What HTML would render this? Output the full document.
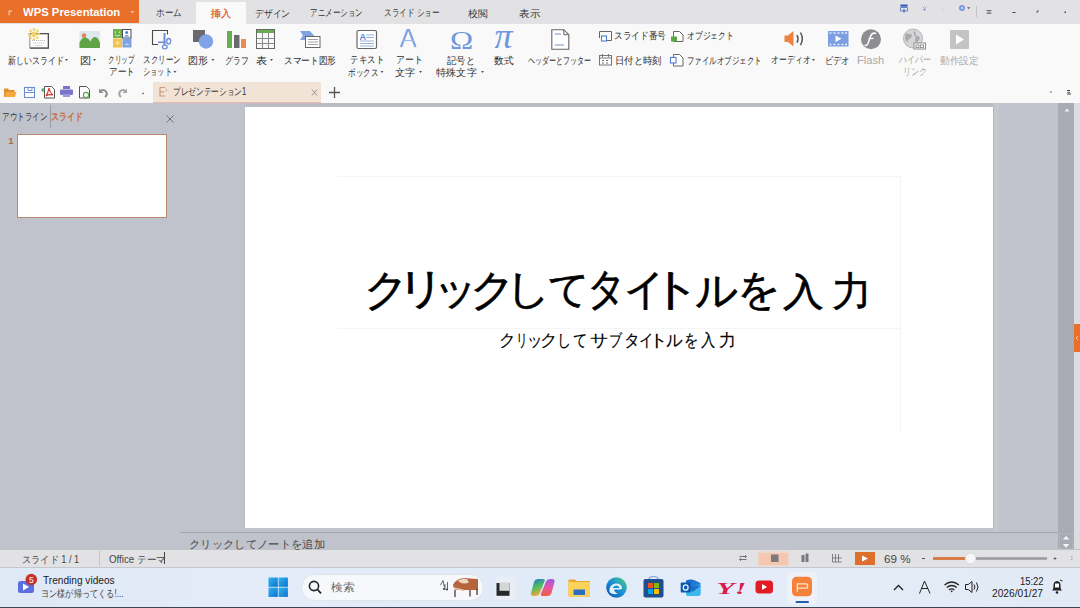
<!DOCTYPE html>
<html><head><meta charset="utf-8">
<style>
*{margin:0;padding:0;box-sizing:border-box}
html,body{width:1080px;height:608px;overflow:hidden;background:#c0c3cb;font-family:"Liberation Sans",sans-serif;color:#222;position:relative}
.a{position:absolute}
.tx{position:absolute;white-space:nowrap;transform-origin:0 0}
svg{position:absolute;overflow:visible}
</style></head><body>
<!-- tab bar -->
<div class="a" style="left:0;top:0;width:1080px;height:24px;background:#e2e2e5"></div>
<div class="a" style="left:0;top:0;width:139px;height:23px;background:#e8702b"></div>
<svg style="left:0;top:0" width="139" height="23">
  <path d="M8.5 10.5h3.5v1.2h-2.3v3.5h-1.2z" fill="#f6c9ab"/>
  <path d="M130 11h4.5l-2.25 2.5z" fill="#f3b48f"/>
</svg>
<div class="a" style="left:196px;top:2px;width:50px;height:22px;background:#f9f9f9"></div>
<!-- top right icons -->
<svg style="left:890px;top:0" width="190" height="23">
  <rect x="10.5" y="4.5" width="7" height="2.2" fill="#3658b8"/>
  <path d="M10.5 7.5h7v3.5h-7z" fill="none" stroke="#5a78c8" stroke-width="0.9"/>
  <path d="M14 9v3.5" stroke="#3658b8" stroke-width="1.2"/>
  <path d="M32.5 6.5l2 2 2-2M34.5 8.5v2.5M33 9.5h3" fill="none" stroke="#8fa3d8" stroke-width="0.9"/>
  <path d="M53 12v-4M51.5 9.5l1.5-1.8 1.5 1.8" fill="none" stroke="#dadade" stroke-width="0.9"/>
  <circle cx="72" cy="8" r="3" fill="#7b98dc"/>
  <circle cx="72" cy="8" r="1.2" fill="#c4d2f2"/>
  <path d="M77 7.2h3.4l-1.7 2z" fill="#666"/>
  <path d="M86.5 6v11" stroke="#c3c3c7" stroke-width="1"/>
  <path d="M96.5 10.5h5M97.5 12h3M96.5 13.3h5" stroke="#555" stroke-width="0.8"/>
  <path d="M122.5 12.5h3" stroke="#444" stroke-width="1"/>
  <path d="M146.5 12.5l2-2" stroke="#666" stroke-width="1.2"/>
  <rect x="174.5" y="11.5" width="1.5" height="1.5" fill="#444"/>
</svg>

<!-- ribbon -->
<div class="a" style="left:0;top:24px;width:1080px;height:79px;background:#f9f9f9"></div>

<!-- ribbon icons -->
<svg style="left:0;top:0" width="1080" height="103">
  <!-- new slide -->
  <rect x="29.8" y="33.6" width="18.5" height="14.4" fill="#fff" stroke="#8a8a8a" stroke-width="1"/>
  <path d="M30 33.6h18.4v14.6h-18.4" fill="none" stroke="#505050" stroke-width="1.2"/>
  <path d="M32 40.5h14M33 43h12M35 45.5h8" stroke="#b0b0b0" stroke-width="0.8" stroke-dasharray="1.2 0.8"/>
  <g fill="#f1d36e">
    <circle cx="34" cy="34.3" r="2.8"/>
    <circle cx="34" cy="29.5" r="1.4"/><circle cx="34" cy="39.1" r="1.4"/>
    <circle cx="29.2" cy="34.3" r="1.4"/><circle cx="38.8" cy="34.3" r="1.4"/>
    <circle cx="30.6" cy="30.9" r="1.3"/><circle cx="37.4" cy="37.7" r="1.3"/>
    <circle cx="37.4" cy="30.9" r="1.3"/><circle cx="30.6" cy="37.7" r="1.3"/>
  </g>
  <!-- picture -->
  <rect x="79.5" y="31" width="20.5" height="17" fill="#dfe7ee"/>
  <circle cx="84" cy="35.5" r="2.3" fill="#e0875a"/>
  <path d="M79.5 48v-5.5q3-6 6.5-5 q3 1 4.5 4 q2-5 5-4.5 q3 1 4.5 6v5z" fill="#5fa546"/>
  <!-- clipart -->
  <rect x="113" y="29" width="9" height="9" fill="#6fb34f"/>
  <rect x="122.5" y="29.5" width="8.5" height="8.5" fill="#fff" stroke="#4a4a5a" stroke-width="1"/>
  <circle cx="126.7" cy="32.5" r="1.5" fill="#4f7fd0"/>
  <path d="M124 36.5q2.7-3 5.4 0z" fill="#4f7fd0"/>
  <path d="M115.5 31.5v1.5M119.5 31.5v1.5M115 35q2.5 2 5 0" stroke="#cfe8b8" stroke-width="1" fill="none"/>
  <rect x="113" y="38.5" width="9" height="9" fill="#f2c24c"/>
  <circle cx="117.5" cy="43" r="2" fill="#f9e08e"/>
  <rect x="122.5" y="38.5" width="9" height="9" fill="#7ea3e0"/>
  <path d="M124.5 45q2.5-3 5 0z" fill="#c8d8f4"/>
  <!-- screenshot -->
  <path d="M167.5 34.5V30.5H152.5V44.5H158" fill="none" stroke="#4a4a4a" stroke-width="1.1"/>
  <path d="M164.5 33v12.5" stroke="#6f8fd8" stroke-width="2"/>
  <path d="M158 42.3h7.5" stroke="#6f8fd8" stroke-width="1.6"/>
  <ellipse cx="168.7" cy="41.3" rx="2" ry="2.8" fill="none" stroke="#6f8fd8" stroke-width="1.3"/>
  <ellipse cx="164.8" cy="47" rx="2.4" ry="1.8" fill="none" stroke="#6f8fd8" stroke-width="1.3"/>
  <!-- shape -->
  <rect x="193" y="30" width="12" height="12" fill="#6a6a6e"/>
  <circle cx="206" cy="41.5" r="7.2" fill="#7ea3e6"/>
  <!-- graph -->
  <rect x="227" y="31" width="5" height="17" fill="#6aad4d"/>
  <rect x="234" y="35" width="5.5" height="13" fill="#6b6b6f"/>
  <rect x="241" y="39" width="5" height="9" fill="#ec8b4d"/>
  <!-- table -->
  <rect x="256" y="29" width="19" height="4" fill="#6aad4d"/>
  <rect x="256.5" y="29.5" width="18" height="19" fill="none" stroke="#666" stroke-width="1"/>
  <path d="M256.5 38.5h18M256.5 43.5h18M262.5 33v15.5M268.5 33v15.5" stroke="#8a8a8a" stroke-width="1"/>
  <!-- smart art -->
  <path d="M300 31h10l4 4.5-4 4.5h-10l3-4.5z" fill="#7ea3e0"/>
  <rect x="305.5" y="36.5" width="14.5" height="11" fill="#fff" stroke="#666" stroke-width="1"/>
  <path d="M308 39.5h10M308 42h10M308 44.5h10" stroke="#999" stroke-width="0.9"/>
  <!-- textbox -->
  <rect x="357" y="30.5" width="19.5" height="18" rx="1.5" fill="#fff" stroke="#666" stroke-width="1.2"/>
  <text x="359.5" y="39.5" font-size="9" font-family="Liberation Sans" font-weight="bold" fill="#5a86d6">A</text>
  <path d="M366 35h8M366 37.5h8M360 41h14M360 43.5h14M360 46h14" stroke="#8fa9d8" stroke-width="0.9"/>
  <!-- art text -->
  <path d="M401 47l6.5-17l1.5 0l6.5 17" fill="none" stroke="#7ea3e0" stroke-width="2.2"/>
  <path d="M403 40.5h11" stroke="#9ab7e8" stroke-width="1.2"/>
  <!-- omega -->
  <text x="0" y="0" font-size="26" font-family="Liberation Serif" fill="#6f97de" transform="translate(450 48.5) scale(1.2 1)">Ω</text>
  <!-- pi -->
  <text x="494.5" y="47.5" font-size="36" font-family="Liberation Serif" font-style="italic" fill="#6f97de">π</text>
  <!-- header footer -->
  <path d="M551.8 29.7h12l5 5v14.5h-17z" fill="#fff" stroke="#666" stroke-width="1.1"/>
  <path d="M563.8 29.7v5h5" fill="none" stroke="#666" stroke-width="1"/>
  <path d="M555 34h6M555 45h9" stroke="#6c8fd0" stroke-width="1.2"/>
  <!-- slide number -->
  <path d="M599.5 38V31.5H611.5V40.5H607" fill="none" stroke="#666" stroke-width="1"/>
  <rect x="601.5" y="36" width="5" height="5" fill="#fff" stroke="#4f7fd0" stroke-width="1.1"/>
  <!-- object -->
  <path d="M673.5 31.5h6l3.5 3.5v6.5h-9.5z" fill="#fff" stroke="#666" stroke-width="1"/>
  <rect x="671" y="36.5" width="6" height="5" fill="#5aa848"/>
  <!-- date time -->
  <rect x="599.5" y="55.5" width="12" height="9.5" fill="#fff" stroke="#777" stroke-width="1"/>
  <path d="M599.5 58h12M602.5 54v3M608.5 54v3M602 60.5h2M606 60.5h2M602 63h2M606 63h2" stroke="#777" stroke-width="1"/>
  <!-- file object -->
  <path d="M673.5 54.5h6l3.5 3.5v8h-9.5z" fill="#fff" stroke="#666" stroke-width="1"/>
  <rect x="670.5" y="57.5" width="5.5" height="5.5" fill="#fff" stroke="#4f7fd0" stroke-width="1.1"/>
  <!-- audio -->
  <path d="M784.5 35.5h3.5l5.5-4.5v15.5l-5.5-4.5h-3.5z" fill="#ec8340"/>
  <path d="M797 35q2 3.8 0 7.6" fill="none" stroke="#555" stroke-width="1.5"/>
  <path d="M800.5 32.5q3.5 6.3 0 12.6" fill="none" stroke="#555" stroke-width="1.5"/>
  <!-- video -->
  <rect x="828" y="31" width="20.5" height="15.5" fill="#7b9fe0"/>
  <path d="M829.5 33h2M833.5 33h2M837.5 33h2M841.5 33h2M845 33h2M829.5 44.5h2M833.5 44.5h2M837.5 44.5h2M841.5 44.5h2M845 44.5h2" stroke="#e8eefa" stroke-width="1.3"/>
  <path d="M835.5 35.5l6 3.2-6 3.2z" fill="#fff"/>
  <!-- flash -->
  <circle cx="871" cy="39.3" r="10" fill="#8e8e92"/>
  <path d="M876 33.5q-4-1.5-5.5 3l-2.5 7q-1 2.5-3.5 2" fill="none" stroke="#fff" stroke-width="1.5"/>
  <path d="M868.5 38.5h5" stroke="#fff" stroke-width="1.3"/>
  <!-- hyperlink -->
  <circle cx="913" cy="38.5" r="9.5" fill="#d6d6d9" stroke="#b5b5b8" stroke-width="1"/>
  <path d="M906 33q3 2 5 0.5 q2 3 -1 5 q-3 1-2 4 q-2-1-3-4z M914 30.5q3 3 1 5q3 0 5 2q-1 4-4 5q-2-3 0-5q-3-2-2-7z" fill="#a9a9ad"/>
  <rect x="914" y="43" width="11.5" height="6" fill="#fff" stroke="#8a8a8e" stroke-width="1"/>
  <rect x="916" y="45" width="3" height="2.5" fill="none" stroke="#8a8a8e" stroke-width="0.9"/>
  <rect x="920.5" y="45" width="3" height="2.5" fill="none" stroke="#8a8a8e" stroke-width="0.9"/>
  <!-- action -->
  <rect x="950" y="30" width="19" height="19" rx="1" fill="#c3c3c6"/>
  <path d="M956 34.5l8 5-8 5z" fill="#fff"/>
  <!-- dropdown arrows -->
  <g fill="#555">
    <path d="M65 59h3l-1.5 2z"/>
    <path d="M93 59h3l-1.5 2z"/>
    <path d="M173.5 71h3l-1.5 2z"/>
    <path d="M211.5 59h3l-1.5 2z"/>
    <path d="M270 59h3l-1.5 2z"/>
    <path d="M380.5 71h3l-1.5 2z"/>
    <path d="M419 71h3l-1.5 2z"/>
    <path d="M481 71h3l-1.5 2z"/>
    <path d="M812 59h3l-1.5 2z"/>
  </g>
  <!-- ribbon bottom right small icons -->
  <path d="M1049.5 91.5h2.5l-1 1.5z" fill="#666"/>
  <path d="M1067 90.5h3M1067.5 92.3h2.5M1067 94h4" stroke="#333" stroke-width="0.9"/>

  <!-- QAT -->
  <path d="M4 88.5h4l1 1.5h5.5v7h-10.5z" fill="#e2902f"/>
  <path d="M5.5 92h11l-1.5 5h-10z" fill="#f5a93e"/>
  <rect x="24.5" y="87.5" width="10" height="10" fill="#fff" stroke="#6d8fd0" stroke-width="1.1"/>
  <path d="M24.5 92.5h10M28 87.5v3h4v-3" fill="none" stroke="#6d8fd0" stroke-width="1"/>
  <path d="M44.5 86.5h7l3 3v8.5h-10z" fill="#fff" stroke="#555" stroke-width="1"/>
  <path d="M46 96q2-3 3-8q1 5 4 7q-4-1-7 1z" fill="none" stroke="#d63a2d" stroke-width="1.2"/>
  <path d="M41 90h4M43 88v4" stroke="#3aa04a" stroke-width="1.1"/>
  <rect x="63" y="86" width="7" height="3" fill="#7b75c9"/>
  <rect x="60" y="89.5" width="13" height="5.5" rx="1" fill="#7b75c9"/>
  <rect x="63" y="94" width="7" height="3" fill="#9d98dc"/>
  <path d="M79.5 86.5h7l3 3v8.5h-10z" fill="#fff" stroke="#555" stroke-width="1"/>
  <circle cx="86" cy="95" r="2.6" fill="none" stroke="#59a94a" stroke-width="1.1"/>
  <path d="M100 91.5q3-3 6 0q2 3-1 5.5" fill="none" stroke="#8d8d91" stroke-width="2"/>
  <path d="M99 88.5v4.5h4.5z" fill="#8d8d91"/>
  <path d="M126 91.5q-3-3-6 0q-2 3 1 5.5" fill="none" stroke="#a5a5a9" stroke-width="2"/>
  <path d="M127 88.5v4.5h-4.5z" fill="#a5a5a9"/>
  <path d="M142 94l2-1" stroke="#555" stroke-width="1"/>
</svg>

<!-- doc tab -->
<div class="a" style="left:153px;top:82px;width:168px;height:20px;background:#f1e3d5"></div>
<div class="a" style="left:153px;top:101.5px;width:168px;height:1px;background:#ebbba8"></div>
<svg style="left:0;top:0" width="350" height="103">
  <path d="M160 87.5h5M160 87.5v8.5h5M160 91.8h4" fill="none" stroke="#c99c7e" stroke-width="1.2"/>
  <path d="M165.5 88.5l1.5 1.5-1.5 1.5" fill="none" stroke="#c99c7e" stroke-width="0.8"/>
  <path d="M312 89.5l5 6M317 89.5l-5 6" stroke="#8a8a8a" stroke-width="0.9"/>
  <path d="M329 92.5h11M334.5 87v11" stroke="#555" stroke-width="1.3"/>
</svg>

<!-- main -->
<div class="a" style="left:0;top:103px;width:1080px;height:446px;background:#c0c3cb"></div>
<div class="a" style="left:245px;top:103px;width:748px;height:4px;background:#babdc4"></div>
<div class="a" style="left:243.5px;top:112px;width:1.5px;height:416px;background:#b7bac1"></div>
<div class="a" style="left:245px;top:107px;width:748px;height:420.5px;background:#fff"></div>
<div class="a" style="left:993px;top:107px;width:1px;height:421px;background:#b2b5bc"></div>
<div class="a" style="left:994px;top:103px;width:5px;height:429px;background:#c5c8ce"></div>
<!-- placeholder dashed lines -->
<div class="a" style="left:336px;top:176px;width:565px;height:153px;border:1px solid #f5f5f5;border-left-color:transparent"></div>
<div class="a" style="left:336px;top:328px;width:565px;height:104px;border:1px solid #f5f5f5;border-top:none;border-left-color:transparent;border-bottom-color:transparent"></div>
<!-- left panel -->
<div class="a" style="left:49.5px;top:105px;width:1px;height:23px;background:#9a9da6"></div>
<svg style="left:0;top:0" width="240" height="240">
  <path d="M166.5 115.5l7 7M173.5 115.5l-7 7" stroke="#6a6a6e" stroke-width="0.9"/>
</svg>
<div class="a" style="left:17px;top:134px;width:150px;height:84px;background:#fff;border:1px solid #b9876a"></div>
<!-- right scrollbar -->
<div class="a" style="left:1058px;top:103px;width:16px;height:446px;background:#a9aab3"></div>
<div class="a" style="left:1059px;top:533px;width:14px;height:16px;border:1px dotted #b8b9c0"></div>
<div class="a" style="left:1074px;top:103px;width:6px;height:446px;background:#dcdde2"></div>
<div class="a" style="left:1074px;top:324px;width:6px;height:28px;background:#e8702b"></div>
<svg style="left:1074px;top:324px" width="6" height="28"><path d="M4 12l-2 2 2 2" fill="none" stroke="#f8d2b8" stroke-width="0.9"/></svg>
<svg style="left:1050px;top:100px" width="30" height="450">
  <path d="M14.5 11.5l2.5-3 2.5 3z" fill="#eee"/>
  <path d="M12.8 439.6l3.3-3.6 3.3 3.6z" fill="#f6f6f6"/>
  <path d="M12.8 443.9l3.3 3.8 3.3-3.8z" fill="#f6f6f6"/>
</svg>
<!-- notes -->
<div class="a" style="left:180px;top:532px;width:878px;height:1px;background:#a5a8b0"></div>
<!-- status bar -->
<div class="a" style="left:0;top:549.5px;width:1080px;height:18.5px;background:#e2e2e5"></div>
<div class="a" style="left:98.5px;top:551px;width:1px;height:15px;background:#c5c5c8"></div>
<div class="a" style="left:759px;top:552.5px;width:29px;height:12.5px;background:#f6c7b0;box-shadow:0 0 3px 1px #f3d2c2"></div>
<div class="a" style="left:855px;top:552px;width:20px;height:13px;background:#df6f2d"></div>
<svg style="left:0;top:0" width="1080" height="608">
  <path d="M739.5 556.5h7M739.5 559.5h7" stroke="#666" stroke-width="0.9"/>
  <path d="M745 555l1.5 1.5-1.5 1.5M741 558l-1.5 1.5 1.5 1.5" fill="none" stroke="#666" stroke-width="0.8"/>
  <rect x="771" y="554.5" width="7.5" height="7.5" fill="#7a7a7e"/>
  <rect x="801.5" y="555" width="3" height="7" fill="#7a7a7e"/>
  <rect x="805.5" y="553.5" width="3" height="8.5" fill="#7a7a7e"/>
  <path d="M832.5 554v8h9M835.5 554v8M838.5 554v8M832.5 558h9" fill="none" stroke="#777" stroke-width="0.9"/>
  <path d="M862 555.5l6 3-6 3z" fill="#fff"/>
  <path d="M922 558.5h3" stroke="#555" stroke-width="1"/>
  <rect x="933" y="557.2" width="114" height="2.6" fill="#9c9c9f"/>
  <rect x="933" y="557.2" width="36" height="2.6" fill="#e2753d"/>
  <circle cx="970.5" cy="558.5" r="5.2" fill="#f7f7f7" stroke="#d8d8d8" stroke-width="0.8"/>
  <path d="M1053.5 558.5h3M1055 557v3" stroke="#555" stroke-width="0.8"/>
  <path d="M1071 557h1.5M1071 559.5h1.5" stroke="#888" stroke-width="0.8"/>
  <path d="M164.5 552v12" stroke="#333" stroke-width="0.9"/>
</svg>

<!-- taskbar -->
<div class="a" style="left:0;top:568px;width:1080px;height:40px;background:linear-gradient(90deg,#dfe8f5 0%,#e3ecf8 25%,#e1ebf8 50%,#e4ecf8 75%,#e2eaf6 100%)"></div>
<div class="a" style="left:0;top:567px;width:1080px;height:1px;background:#c3c7ce"></div>
<div class="a" style="left:0;top:606.5px;width:1080px;height:1.5px;background:#3a4558"></div>
<div class="a" style="left:301px;top:573.5px;width:183px;height:27px;border-radius:14px;background:#f6f8fb;border:1px solid #dfe3ea"></div>
<div class="a" style="left:787px;top:571.5px;width:30px;height:32px;border-radius:4px;background:#eef2f8"></div>
<svg style="left:0;top:0" width="1080" height="608">
  <!-- trending icon -->
  <rect x="18" y="581" width="16" height="12" rx="2.5" fill="#5b6ee0"/>
  <path d="M23 583.5l6 3.5-6 3.5z" fill="#fff"/>
  <circle cx="31.3" cy="579.5" r="5.8" fill="#c4312b"/>
  <text x="29" y="582.8" font-size="8.5" font-family="Liberation Sans" fill="#fff">5</text>
  <!-- windows logo -->
  <g fill="url(#winG)">
    <rect x="268.5" y="577.5" width="9.3" height="9.3"/>
    <rect x="278.6" y="577.5" width="9.3" height="9.3"/>
    <rect x="268.5" y="587.6" width="9.3" height="9.3"/>
    <rect x="278.6" y="587.6" width="9.3" height="9.3"/>
  </g>
  <!-- search icon -->
  <circle cx="314" cy="586" r="4.6" fill="none" stroke="#222" stroke-width="1.6"/>
  <path d="M317.5 589.5l3.5 3.8" stroke="#222" stroke-width="1.8"/>
  <!-- piano deco -->
  <path d="M453 585q2-5 8-6.5q5-1 9 0l8 0.5v11h-22q-3-2-3-5z" fill="#b5643c"/>
  <path d="M458 580.5q4-2.5 9-1.5l2 3.5q-5 2-9 0z" fill="#f0d6bd"/>
  <path d="M454 588l10 2.5" stroke="#e8c6a8" stroke-width="1.6"/>
  <path d="M455 590v7M470 590v6.5M477 589v6" stroke="#4a2a1a" stroke-width="1.2"/>
  <path d="M440.5 585l2.5-4.5l1.5 7M445 584v6M447.5 582v7" fill="none" stroke="#555" stroke-width="0.9"/>
  <circle cx="444" cy="589" r="1.1" fill="#444"/>
  <circle cx="447" cy="589.5" r="1.1" fill="#444"/>
  <!-- task view -->
  <rect x="495" y="577" width="21" height="23" rx="3" fill="#e9eef6"/>
  <rect x="496.5" y="583" width="13" height="12.8" fill="#26282c"/>
  <rect x="499.5" y="582.5" width="10" height="8.3" fill="#d6d6d8"/>
  <!-- copilot -->
  <defs>
    <linearGradient id="cpA" x1="0" y1="0" x2="0.3" y2="1"><stop offset="0" stop-color="#1f6fd8"/><stop offset="0.55" stop-color="#4cc15e"/><stop offset="1" stop-color="#f2a43a"/></linearGradient>
    <linearGradient id="cpB" x1="0" y1="0" x2="0" y2="1"><stop offset="0" stop-color="#9d5be0"/><stop offset="0.5" stop-color="#e657a8"/><stop offset="1" stop-color="#f0603a"/></linearGradient>
    <linearGradient id="edA" x1="0" y1="1" x2="1" y2="0"><stop offset="0" stop-color="#0d4fa8"/><stop offset="0.5" stop-color="#1a8fd8"/><stop offset="1" stop-color="#52d07a"/></linearGradient>
    <linearGradient id="winG" x1="0" y1="0" x2="1" y2="1"><stop offset="0" stop-color="#33b2f2"/><stop offset="1" stop-color="#0a74cc"/></linearGradient>
  </defs>
  <path d="M534 582q1-3 4.5-3h4.5q2.5 0 1.5 2.5l-5 12q-1 2.5-4 2.5h-2q-3 0-2.5-3z" fill="url(#cpA)"/>
  <path d="M551.5 593q-1 3-4.5 3h-4.5q-2.5 0-1.5-2.5l5-12q1-2.5 4-2.5h2q3 0 2.5 3z" fill="url(#cpB)"/>
  <!-- explorer -->
  <path d="M568.5 579.5h6.5l1.5 1.5h13.5v15.5h-21.5z" fill="#e9a92a"/>
  <rect x="568.5" y="582" width="21.5" height="14.5" fill="#fbd35a"/>
  <rect x="573.5" y="589.5" width="11.5" height="5.5" fill="#2a6fc0"/>
  <!-- edge -->
  <circle cx="616.5" cy="587.5" r="10.3" fill="url(#edA)"/>
  <path d="M609.5 589.5q0.5-5 6-6q5-0.5 6.5 3.5q0.5 2-1.5 2.5h-6.5q0.5 3 4 4q-4.5 1.5-7.5-0.5q-1.5-1.5-1-3.5z" fill="#dff3fb"/>
  <path d="M612.5 588q1.5-2.5 4-2.5q2.5 0 3 2.5z" fill="#1a8fd8"/>
  <!-- store -->
  <rect x="643.5" y="579" width="20" height="18.5" rx="2" fill="#1e4f8c"/>
  <path d="M649 579q0-2.5 4.5-2.5q4.5 0 4.5 2.5" fill="none" stroke="#7fa3d0" stroke-width="1.2"/>
  <rect x="648" y="583" width="5" height="5" fill="#f25022"/>
  <rect x="654" y="583" width="5" height="5" fill="#7fba00"/>
  <rect x="648" y="589" width="5" height="5" fill="#00a4ef"/>
  <rect x="654" y="589" width="5" height="5" fill="#ffb900"/>
  <!-- outlook -->
  <defs><linearGradient id="olG" x1="0" y1="0" x2="0.4" y2="1"><stop offset="0" stop-color="#1b64c8"/><stop offset="0.5" stop-color="#1f7fd8"/><stop offset="1" stop-color="#4fd0f2"/></linearGradient></defs>
  <path d="M686 580.5q5-2 9 0l5.5 2.5v10q0 2.5-2.5 2.5h-10q-2 0-2-2z" fill="url(#olG)"/>
  <path d="M686 586l14.5 0v7.5q0 2.5-2.5 2.5h-10q-2 0-2-2z" fill="#3cb8ec"/>
  <path d="M686 586l14.5 0-8 6z" fill="#1e6fcc"/>
  <rect x="680.7" y="582.5" width="10" height="10" rx="1" fill="#0c58b0"/>
  <ellipse cx="685.7" cy="587.5" rx="2.4" ry="2.7" fill="none" stroke="#dff4ff" stroke-width="1.3"/>
  <!-- yahoo -->
  <text x="0" y="0" font-size="17" font-family="Liberation Serif" font-weight="bold" font-style="italic" fill="#d91b4c" transform="translate(716.5 594) scale(1.75 1)">Y!</text>
  <!-- youtube -->
  <rect x="755.5" y="580.5" width="17.5" height="13" rx="3.5" fill="#e21b24"/>
  <path d="M762 584l5 3-5 3z" fill="#fff"/>
  <!-- wps app -->
  <rect x="792" y="576.7" width="20" height="19.6" rx="4.5" fill="#f4823a"/>
  <path d="M797.3 591.8V583.8H806.3q1.3 0 1.3 1.3v1.8q0 1.3-1.3 1.3H797.3" fill="none" stroke="#fde3c8" stroke-width="1.3"/>
  <rect x="795.5" y="601" width="13.5" height="2" rx="1" fill="#1f5fae"/>
  <!-- tray -->
  <path d="M894 590l4.5-4.5 4.5 4.5" fill="none" stroke="#222" stroke-width="1.4"/>
  <path d="M919.5 593.5l5-12.5l5.5 12.5M921.5 588.5h6.5" fill="none" stroke="#222" stroke-width="1"/>
  <path d="M944.5 585q7.2-6 14.4 0M946.7 587.5q5-4 10 0M949 590q2.7-2.2 5.4 0" fill="none" stroke="#222" stroke-width="1.3"/>
  <circle cx="951.7" cy="591.3" r="0.9" fill="#222"/>
  <path d="M965.5 584.5h2.8l3.7-3v11l-3.7-3h-2.8z" fill="none" stroke="#222" stroke-width="1"/>
  <path d="M974 584.5q1.8 2.5 0 5M976.5 582.5q3 4.5 0 9" fill="none" stroke="#222" stroke-width="1"/>
  <!-- bell -->
  <path d="M1052 590.5q1.5-1 1.5-3.5v-2q0-3.5 3.5-4q3.5 0.5 3.5 4v2q0 2.5 1.5 3.5z" fill="#222"/>
  <circle cx="1057" cy="592.5" r="1.3" fill="#222"/>
  <rect x="1055" y="583.5" width="4" height="4" fill="#fff"/>
  <path d="M1060 580l2.5 1" stroke="#222" stroke-width="1"/>
</svg>

<div class="tx" style="left:22.50px;top:5.30px;font-size:11px;line-height:14px;color:#ffffff;transform:scaleX(1.0266);font-weight:bold">WPS Presentation</div>
<div class="tx" style="left:155.54px;top:6.50px;font-size:10px;line-height:12px;color:#333;transform:scaleX(0.8571);">ホーム</div>
<div class="tx" style="left:210.70px;top:7.50px;font-size:10px;line-height:12px;color:#d9622a;-webkit-text-stroke:0.3px #d9622a">挿入</div>
<div class="tx" style="left:254.54px;top:7.50px;font-size:10px;line-height:12px;color:#333;transform:scaleX(0.8811);">デザイン</div>
<div class="tx" style="left:310.25px;top:6.50px;font-size:10px;line-height:12px;color:#333;transform:scaleX(0.7500);">アニメーション</div>
<div class="tx" style="left:384.24px;top:6.50px;font-size:10px;line-height:12px;color:#333;transform:scaleX(0.7606);">スライド ショー</div>
<div class="tx" style="left:467.50px;top:7.50px;font-size:10px;line-height:12px;color:#333;transform:scaleX(0.9750);">校閲</div>
<div class="tx" style="left:518.95px;top:7.50px;font-size:10px;line-height:12px;color:#333;transform:scaleX(1.0526);">表示</div>
<div class="tx" style="left:8.00px;top:55.00px;font-size:10px;line-height:12px;color:#2b2b2b;transform:scaleX(0.7971);">新しいスライド</div>
<div class="tx" style="left:79.88px;top:55.00px;font-size:10px;line-height:12px;color:#2b2b2b;transform:scaleX(1.1250);">図</div>
<div class="tx" style="left:107.53px;top:54.00px;font-size:10px;line-height:12px;color:#2b2b2b;transform:scaleX(0.6658);">クリップ</div>
<div class="tx" style="left:109.15px;top:66.00px;font-size:10px;line-height:12px;color:#2b2b2b;transform:scaleX(0.8519);">アート</div>
<div class="tx" style="left:142.95px;top:54.00px;font-size:10px;line-height:12px;color:#2b2b2b;transform:scaleX(0.7521);">スクリーン</div>
<div class="tx" style="left:143.16px;top:66.00px;font-size:10px;line-height:12px;color:#2b2b2b;transform:scaleX(0.7222);">ショット</div>
<div class="tx" style="left:187.50px;top:55.00px;font-size:10px;line-height:12px;color:#2b2b2b;">図形</div>
<div class="tx" style="left:224.71px;top:55.00px;font-size:10px;line-height:12px;color:#2b2b2b;transform:scaleX(0.7857);">グラフ</div>
<div class="tx" style="left:255.89px;top:55.00px;font-size:10px;line-height:12px;color:#2b2b2b;transform:scaleX(1.1111);">表</div>
<div class="tx" style="left:283.54px;top:55.00px;font-size:10px;line-height:12px;color:#2b2b2b;transform:scaleX(0.8644);">スマート図形</div>
<div class="tx" style="left:350.30px;top:54.00px;font-size:10px;line-height:12px;color:#2b2b2b;transform:scaleX(0.8500);">テキスト</div>
<div class="tx" style="left:347.54px;top:67.00px;font-size:10px;line-height:12px;color:#2b2b2b;transform:scaleX(0.7553);">ボックス</div>
<div class="tx" style="left:395.61px;top:54.00px;font-size:10px;line-height:12px;color:#2b2b2b;transform:scaleX(0.8889);">アート</div>
<div class="tx" style="left:394.60px;top:67.00px;font-size:10px;line-height:12px;color:#2b2b2b;transform:scaleX(1.0200);">文字</div>
<div class="tx" style="left:447.40px;top:55.00px;font-size:10px;line-height:12px;color:#2b2b2b;transform:scaleX(0.9286);">記号と</div>
<div class="tx" style="left:436.30px;top:67.00px;font-size:10px;line-height:12px;color:#2b2b2b;transform:scaleX(1.0175);">特殊文字</div>
<div class="tx" style="left:493.70px;top:55.00px;font-size:10px;line-height:12px;color:#2b2b2b;transform:scaleX(0.9650);">数式</div>
<div class="tx" style="left:528.40px;top:55.00px;font-size:10px;line-height:12px;color:#2b2b2b;transform:scaleX(0.7034);">ヘッダーとフッター</div>
<div class="tx" style="left:614.13px;top:30.00px;font-size:10px;line-height:12px;color:#2b2b2b;transform:scaleX(0.8667);">スライド番号</div>
<div class="tx" style="left:686.52px;top:30.00px;font-size:10px;line-height:12px;color:#2b2b2b;transform:scaleX(0.7807);">オブジェクト</div>
<div class="tx" style="left:615.37px;top:55.00px;font-size:10px;line-height:12px;color:#2b2b2b;transform:scaleX(0.9327);">日付と時刻</div>
<div class="tx" style="left:686.56px;top:55.00px;font-size:10px;line-height:12px;color:#2b2b2b;transform:scaleX(0.7443);">ファイルオブジェクト</div>
<div class="tx" style="left:771.41px;top:54.00px;font-size:10px;line-height:12px;color:#2b2b2b;transform:scaleX(0.7875);">オーディオ</div>
<div class="tx" style="left:825.06px;top:55.00px;font-size:10px;line-height:12px;color:#2b2b2b;transform:scaleX(0.8222);">ビデオ</div>
<div class="tx" style="left:856.69px;top:55.00px;font-size:10px;line-height:12px;color:#a9a9a9;transform:scaleX(1.1087);">Flash</div>
<div class="tx" style="left:898.90px;top:54.00px;font-size:10px;line-height:12px;color:#a9a9a9;transform:scaleX(0.7974);">ハイパー</div>
<div class="tx" style="left:902.77px;top:66.00px;font-size:10px;line-height:12px;color:#a9a9a9;transform:scaleX(0.8154);">リンク</div>
<div class="tx" style="left:940.00px;top:55.00px;font-size:10px;line-height:12px;color:#a9a9a9;transform:scaleX(0.9692);">動作設定</div>
<div class="tx" style="left:172.73px;top:85.50px;font-size:10px;line-height:12px;color:#333;transform:scaleX(0.7660);">プレゼンテーション1</div>
<div class="tx" style="left:1.94px;top:111.30px;font-size:10px;line-height:12px;color:#333;transform:scaleX(0.7586);">アウトライン</div>
<div class="tx" style="left:50.91px;top:111.30px;font-size:10px;line-height:12px;color:#c9612b;transform:scaleX(0.7895);-webkit-text-stroke:0.3px #c9612b">スライド</div>
<div class="tx" style="left:8.50px;top:136.30px;font-size:9px;line-height:11px;color:#b9663e;font-weight:bold">1</div>
<div class="tx" style="left:363.75px;top:261.78px;font-size:40px;line-height:50px;color:#000;transform:scale(1.0867,1.0917);-webkit-text-stroke:0.6px #000">ク</div>
<div class="tx" style="left:397.46px;top:262.47px;font-size:40px;line-height:50px;color:#000;transform:scale(1.1714,1.0629);-webkit-text-stroke:0.6px #000">リ</div>
<div class="tx" style="left:434.34px;top:262.41px;font-size:40px;line-height:50px;color:#000;transform:scale(1.0607,1.0680);-webkit-text-stroke:0.6px #000">ッ</div>
<div class="tx" style="left:470.37px;top:261.78px;font-size:40px;line-height:50px;color:#000;transform:scale(1.1067,1.0917);-webkit-text-stroke:0.6px #000">ク</div>
<div class="tx" style="left:505.97px;top:262.66px;font-size:40px;line-height:50px;color:#000;transform:scale(1.1038,1.0343);-webkit-text-stroke:0.6px #000">し</div>
<div class="tx" style="left:547.98px;top:264.43px;font-size:40px;line-height:50px;color:#000;transform:scale(1.0200,0.9970);-webkit-text-stroke:0.6px #000">て</div>
<div class="tx" style="left:586.55px;top:260.90px;font-size:40px;line-height:50px;color:#000;transform:scale(0.9633,1.1111);-webkit-text-stroke:0.6px #000">タ</div>
<div class="tx" style="left:624.39px;top:261.98px;font-size:40px;line-height:50px;color:#000;transform:scale(1.0032,1.0694);-webkit-text-stroke:0.6px #000">イ</div>
<div class="tx" style="left:649.69px;top:261.31px;font-size:40px;line-height:50px;color:#000;transform:scale(1.2647,1.1088);-webkit-text-stroke:0.6px #000">ト</div>
<div class="tx" style="left:695.14px;top:264.36px;font-size:40px;line-height:50px;color:#000;transform:scale(1.0590,1.0533);-webkit-text-stroke:0.6px #000">ル</div>
<div class="tx" style="left:736.73px;top:263.19px;font-size:40px;line-height:50px;color:#000;transform:scale(1.0667,1.0459);-webkit-text-stroke:0.6px #000">を</div>
<div class="tx" style="left:783.20px;top:267.88px;font-size:40px;line-height:50px;color:#000;transform:scale(1.0154,0.9450);-webkit-text-stroke:0.6px #000">入</div>
<div class="tx" style="left:831.51px;top:265.73px;font-size:40px;line-height:50px;color:#000;transform:scale(0.9853,0.9947);-webkit-text-stroke:0.6px #000">力</div>
<div class="tx" style="left:499.15px;top:330.00px;font-size:17px;line-height:21px;color:#000;transform:scaleX(0.9750);-webkit-text-stroke:0.15px #000">ク</div>
<div class="tx" style="left:515.59px;top:330.00px;font-size:17px;line-height:21px;color:#000;transform:scaleX(0.6778);-webkit-text-stroke:0.15px #000">リ</div>
<div class="tx" style="left:526.67px;top:330.00px;font-size:17px;line-height:21px;color:#000;transform:scaleX(0.9091);-webkit-text-stroke:0.15px #000">ッ</div>
<div class="tx" style="left:540.17px;top:330.00px;font-size:17px;line-height:21px;color:#000;transform:scaleX(1.0167);-webkit-text-stroke:0.15px #000">ク</div>
<div class="tx" style="left:556.90px;top:330.00px;font-size:17px;line-height:21px;color:#000;transform:scaleX(0.8333);-webkit-text-stroke:0.15px #000">し</div>
<div class="tx" style="left:573.06px;top:330.00px;font-size:17px;line-height:21px;color:#000;transform:scaleX(0.8357);-webkit-text-stroke:0.15px #000">て</div>
<div class="tx" style="left:589.53px;top:330.00px;font-size:17px;line-height:21px;color:#000;transform:scaleX(1.0733);-webkit-text-stroke:0.15px #000">サ</div>
<div class="tx" style="left:608.64px;top:330.00px;font-size:17px;line-height:21px;color:#000;transform:scaleX(0.7647);-webkit-text-stroke:0.15px #000">ブ</div>
<div class="tx" style="left:624.45px;top:330.00px;font-size:17px;line-height:21px;color:#000;transform:scaleX(0.9250);-webkit-text-stroke:0.15px #000">タ</div>
<div class="tx" style="left:639.35px;top:330.00px;font-size:17px;line-height:21px;color:#000;transform:scaleX(0.8538);-webkit-text-stroke:0.15px #000">イ</div>
<div class="tx" style="left:649.11px;top:330.00px;font-size:17px;line-height:21px;color:#000;transform:scaleX(1.1143);-webkit-text-stroke:0.15px #000">ト</div>
<div class="tx" style="left:665.93px;top:330.00px;font-size:17px;line-height:21px;color:#000;transform:scaleX(0.9688);-webkit-text-stroke:0.15px #000">ル</div>
<div class="tx" style="left:683.53px;top:330.00px;font-size:17px;line-height:21px;color:#000;transform:scaleX(0.8357);-webkit-text-stroke:0.15px #000">を</div>
<div class="tx" style="left:701.30px;top:330.00px;font-size:17px;line-height:21px;color:#000;transform:scaleX(0.8375);-webkit-text-stroke:0.15px #000">入</div>
<div class="tx" style="left:718.71px;top:330.00px;font-size:17px;line-height:21px;color:#000;transform:scaleX(0.9929);-webkit-text-stroke:0.15px #000">力</div>
<div class="tx" style="left:188.97px;top:537.00px;font-size:11px;line-height:14px;color:#4a4a4a;transform:scaleX(1.0308);">クリックしてノートを追加</div>
<div class="tx" style="left:21.58px;top:553.50px;font-size:10px;line-height:12px;color:#444;transform:scaleX(0.9180);">スライド 1 / 1</div>
<div class="tx" style="left:108.70px;top:553.50px;font-size:10px;line-height:12px;color:#444;transform:scaleX(0.9741);">Office テーマ</div>
<div class="tx" style="left:883.50px;top:551.50px;font-size:11px;line-height:14px;color:#444;transform:scaleX(1.0600);">69 %</div>
<div class="tx" style="left:43.30px;top:572.80px;font-size:11px;line-height:14px;color:#1b1b1b;transform:scaleX(0.9192);">Trending videos</div>
<div class="tx" style="left:41.17px;top:588.00px;font-size:10px;line-height:12px;color:#444;transform:scaleX(0.8163);">ヨン様が帰ってくる!...</div>
<div class="tx" style="left:330.80px;top:580.00px;font-size:11px;line-height:14px;color:#666;transform:scaleX(1.0727);">検索</div>
<div class="tx" style="left:1020.14px;top:574.20px;font-size:11px;line-height:14px;color:#1b1b1b;transform:scaleX(0.8577);">15:22</div>
<div class="tx" style="left:992.40px;top:586.40px;font-size:11px;line-height:14px;color:#1b1b1b;transform:scaleX(0.9255);">2026/01/27</div>
</body></html>
